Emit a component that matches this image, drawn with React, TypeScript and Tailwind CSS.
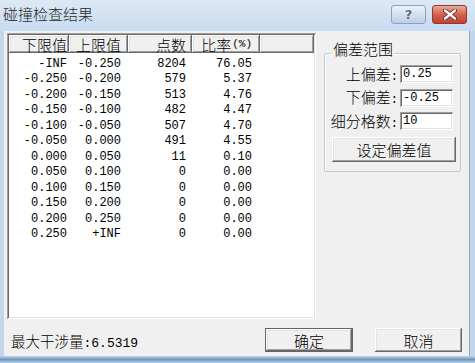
import React from 'react';

const cjk = "font-['Noto_Sans_CJK_SC','Noto_Sans_CJK_JP',sans-serif] font-light";
const mono = "font-['Liberation_Mono','Noto_Sans_CJK_SC',monospace] font-normal";
const raised =
  'shadow-[inset_-1px_-1px_0_#696969,inset_1px_1px_0_#ffffff,inset_-2px_-2px_0_#a0a0a0,inset_2px_2px_0_#e3e3e3]';
const sunken =
  'shadow-[inset_1px_1px_0_#a0a0a0,inset_-1px_-1px_0_#ffffff,inset_2px_2px_0_#696969,inset_-2px_-2px_0_#e3e3e3]';

const rows: [string, string, string, string][] = [
  ['-INF', '-0.250', '8204', '76.05'],
  ['-0.250', '-0.200', '579', '5.37'],
  ['-0.200', '-0.150', '513', '4.76'],
  ['-0.150', '-0.100', '482', '4.47'],
  ['-0.100', '-0.050', '507', '4.70'],
  ['-0.050', '0.000', '491', '4.55'],
  ['0.000', '0.050', '11', '0.10'],
  ['0.050', '0.100', '0', '0.00'],
  ['0.100', '0.150', '0', '0.00'],
  ['0.150', '0.200', '0', '0.00'],
  ['0.200', '0.250', '0', '0.00'],
  ['0.250', '+INF', '0', '0.00'],
];

// column widths + right padding, matched to the header separators
const colCls = [
  'w-[60px] pr-[2px]',
  'w-[59px] pr-[7px]',
  'w-[64px] pr-[6px]',
  'w-[68px] pr-[8px]',
];

const HeaderCell: React.FC<{ className: string; children?: React.ReactNode }> = ({ className, children }) => (
  <div className={`h-[18px] flex items-center justify-end bg-[#f0f0f0] ${raised} ${className}`}>
    {children}
  </div>
);

const ResultList: React.FC = () => (
  <div className={`w-[309px] h-[286px] bg-white p-[2px] ${sunken}`}>
    <div className={`flex ${cjk} text-[15px] leading-none text-black`}>
      <HeaderCell className={colCls[0]}>下限值</HeaderCell>
      <HeaderCell className={colCls[1]}>上限值</HeaderCell>
      <HeaderCell className={colCls[2]}>点数</HeaderCell>
      <HeaderCell className={colCls[3]}>
        比率<span className={`${mono} text-[11px] ml-[1px]`}>(%)</span>
      </HeaderCell>
      <HeaderCell className="flex-1" />
    </div>
    <div className={`pt-[3px] ${mono} text-[12px] leading-none text-black`}>
      {rows.map((r, i) => (
        <div key={i} className="flex h-[15.5px] items-center">
          {r.map((v, j) => (
            <div key={j} className={`text-right whitespace-pre ${colCls[j]}`}>
              {v}
            </div>
          ))}
        </div>
      ))}
    </div>
  </div>
);

const Field: React.FC<{ label: string; value: string }> = ({ label, value }) => (
  <div className="flex items-center">
    <div className={`w-[73px] text-right ${cjk} text-[15px] leading-none`}>
      {label}
      <span className={`${mono} text-[12px]`}>:</span>
    </div>
    <div
      className={`ml-[2px] w-[53px] h-[18px] bg-white pl-[3px] flex items-center ${mono} text-[12px] leading-none ${sunken}`}
    >
      {value}
    </div>
  </div>
);

const Btn: React.FC<{ className?: string; children: React.ReactNode }> = ({ className, children }) => (
  <div
    className={`flex items-center justify-center bg-[#f0f0f0] ${cjk} text-[15px] leading-none text-black ${raised} ${className ?? ''}`}
  >
    {children}
  </div>
);

export default function App() {
  return (
    <div className="w-[475px] h-[363px] flex flex-col bg-[#c3d6ec] overflow-hidden">
      {/* title bar */}
      <div className="h-[31px] flex items-start bg-gradient-to-b from-[#dde8f5] to-[#c8dbf0]">
        <div className={`pl-[3px] pt-[5px] ${cjk} text-[15px] leading-[18px] text-[#2a2a2a]`}>碰撞检查结果</div>
        <div className="ml-auto mt-[5px] flex gap-[6px] pr-[8px]">
          <div className="w-[35px] h-[19px] rounded-[3px] border border-[#8aa2be] bg-gradient-to-b from-[#eaf1f9] to-[#bccfe6] flex items-center justify-center">
            <span className="font-['DejaVu_Sans',sans-serif] font-bold text-[13px] leading-none text-[#5b6d84] [text-shadow:0_0_2px_#fff]">
              ?
            </span>
          </div>
          <div className="w-[35px] h-[19px] rounded-[3px] border border-[#8f3b31] bg-gradient-to-b from-[#e9a896] via-[#d2624f] to-[#c5402f] flex items-center justify-center">
            <svg width="14" height="11" viewBox="0 0 14 11">
              <path d="M2 1.5 L12 9.5 M12 1.5 L2 9.5" stroke="#5a2019" strokeWidth="4" strokeLinecap="round" />
              <path d="M2 1.5 L12 9.5 M12 1.5 L2 9.5" stroke="#ffffff" strokeWidth="2.4" strokeLinecap="round" />
            </svg>
          </div>
        </div>
      </div>

      {/* client */}
      <div className="ml-[4px] mr-[5px] h-[325px] bg-[#f0f0f0] flex flex-col border-r border-[#8aa3bf]">
        <div className="flex pl-[3px] pt-[2px]">
          <ResultList />
          <div className="relative ml-[8px] mt-[20px] w-[137px] h-[119px] border border-[#c2c8cf] shadow-[inset_1px_1px_0_#ffffff] rounded-[2px]">
            <div className={`absolute left-[7px] -top-[13px] px-[1px] bg-[#f0f0f0] ${cjk} text-[15px] leading-[16px]`}>
              偏差范围
            </div>
            <div className="pt-[11px] flex flex-col gap-[5.5px]">
              <Field label="上偏差" value="0.25" />
              <Field label="下偏差" value="-0.25" />
              <Field label="细分格数" value="10" />
            </div>
            <Btn className="ml-[7px] mt-[7px] w-[124px] h-[25px]">设定偏差值</Btn>
          </div>
        </div>

        <div className="mt-[9px] flex items-center h-[24px] pr-[7px]">
          <div className={`pl-[7px] pt-[3px] flex items-baseline ${cjk} text-[14.5px] leading-none`}>
            最大干涉量<span className={`${mono} text-[13px]`}>:6.5319</span>
          </div>
          <Btn className="ml-auto w-[88px] h-[24px] border border-[#646464]">确定</Btn>
          <Btn className="ml-[22px] w-[87px] h-[24px]">取消</Btn>
        </div>
      </div>
      <div className="flex-1 bg-gradient-to-b from-[#c3d6ec] via-[#6f97bd] to-[#bcd2ea]" />
    </div>
  );
}
